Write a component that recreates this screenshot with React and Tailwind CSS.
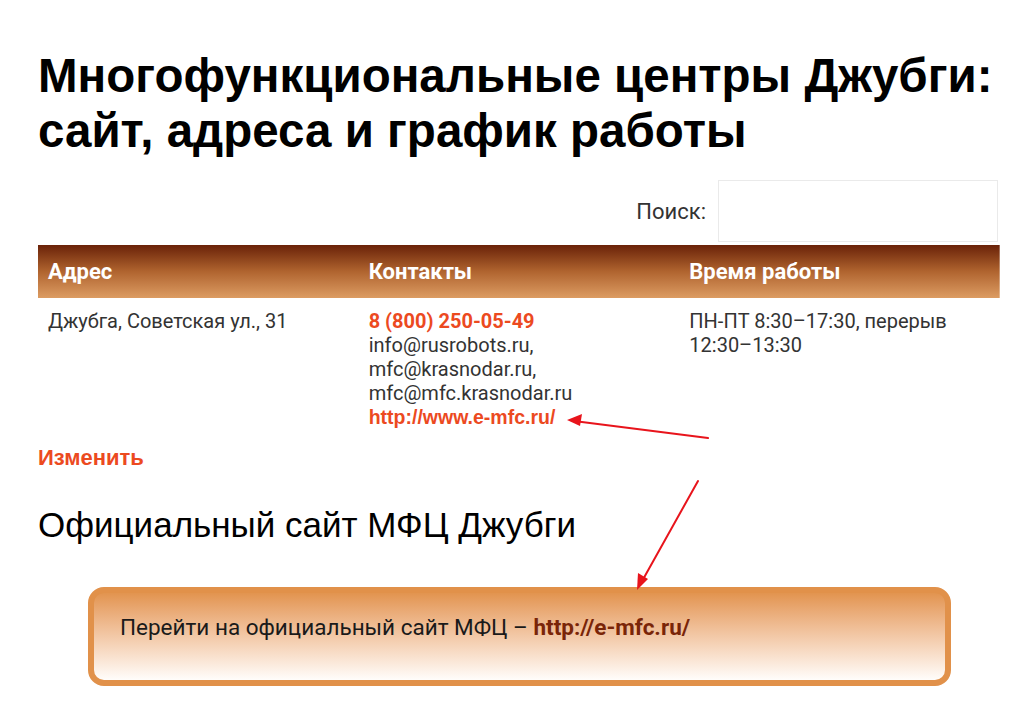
import React from 'react'

const Arrows = () => (
  <svg className="absolute left-0 top-0 pointer-events-none" width="1035" height="703" viewBox="0 0 1035 703">
    <g stroke="#e8141c" strokeWidth="2" fill="#e8141c" strokeLinecap="round">
      <line x1="708" y1="438" x2="574" y2="421" />
      <polygon points="567,420 582,414 580,426" stroke="none" />
      <line x1="698" y1="481" x2="641" y2="583" />
      <polygon points="637,590 638,573 648,579" stroke="none" />
    </g>
  </svg>
)

export default function App() {
  return (
    <div className="relative w-[1035px] h-[703px] bg-white overflow-hidden">
      <div className="pl-[38px] pt-[48px] w-[1035px]">
        <h1 className="text-[47.5px] leading-[55px] font-bold text-black w-[970px]" style={{ fontFamily: '"Liberation Sans", Arial, sans-serif' }}>
          Многофункциональные центры Джубги: сайт, адреса и график работы
        </h1>

        <div className="flex justify-end items-center mt-[22px] w-[960px]" style={{ fontFamily: 'Roboto, sans-serif' }}>
          <span className="text-[22px] text-[#333] mr-[12px]">Поиск:</span>
          <input className="w-[280px] h-[62px] border border-[#eaeaea] bg-white outline-none" />
        </div>

        <table className="w-[962px] mt-[3px] text-left table-fixed border-collapse" style={{ fontFamily: 'Roboto, sans-serif' }}>
          <thead>
            <tr className="bg-gradient-to-b from-[#6a2208] via-[#b0642f] to-[#dc9c62]">
              <th className="h-[53px] px-[10px] text-[22px] font-bold text-white align-middle">Адрес</th>
              <th className="h-[53px] px-[10px] text-[22px] font-bold text-white align-middle">Контакты</th>
              <th className="h-[53px] px-[10px] text-[22px] font-bold text-white align-middle">Время работы</th>
            </tr>
          </thead>
          <tbody>
            <tr className="text-[20px] leading-[24px] text-[#333] align-top">
              <td className="px-[10px] pt-[11px] pb-[12px]">Джубга, Советская ул., 31</td>
              <td className="px-[10px] pt-[11px] pb-[12px]">
                <div className="font-bold text-[#ec4a1f] text-[20px]">8 (800) 250-05-49</div>
                <div>info@rusrobots.ru,</div>
                <div>mfc@krasnodar.ru,</div>
                <div>mfc@mfc.krasnodar.ru</div>
                <div className="font-bold text-[#ec4a1f] text-[19.5px]" style={{ fontFamily: '"Liberation Sans", Arial, sans-serif' }}>http://www.e-mfc.ru/</div>
              </td>
              <td className="px-[10px] pt-[11px] pb-[12px]">ПН-ПТ 8:30–17:30, перерыв 12:30–13:30</td>
            </tr>
          </tbody>
        </table>

        <div className="mt-[3px] text-[22px] leading-[28px] font-bold text-[#ec4a1f]" style={{ fontFamily: '"Liberation Sans", Arial, sans-serif' }}>
          Изменить
        </div>

        <h2 className="mt-[33px] text-[35px] leading-[40px] text-black" style={{ fontFamily: '"Liberation Sans", Arial, sans-serif' }}>
          Официальный сайт МФЦ Джубги
        </h2>

        <div className="ml-[50px] mt-[42px] w-[863px] h-[99px] rounded-[16px] border-[6px] border-[#e1914a] bg-gradient-to-b from-[#e2944f] to-[#fffdfb] pl-[26px] pt-[21px] leading-[26px]" style={{ fontFamily: 'Roboto, sans-serif' }}>
          <span className="text-[22.5px] text-[#1a1a1a]">Перейти на официальный сайт МФЦ – </span>
          <span className="text-[22.5px] font-bold text-[#7a2508]">http://e-mfc.ru/</span>
        </div>
      </div>
      <Arrows />
    </div>
  )
}
